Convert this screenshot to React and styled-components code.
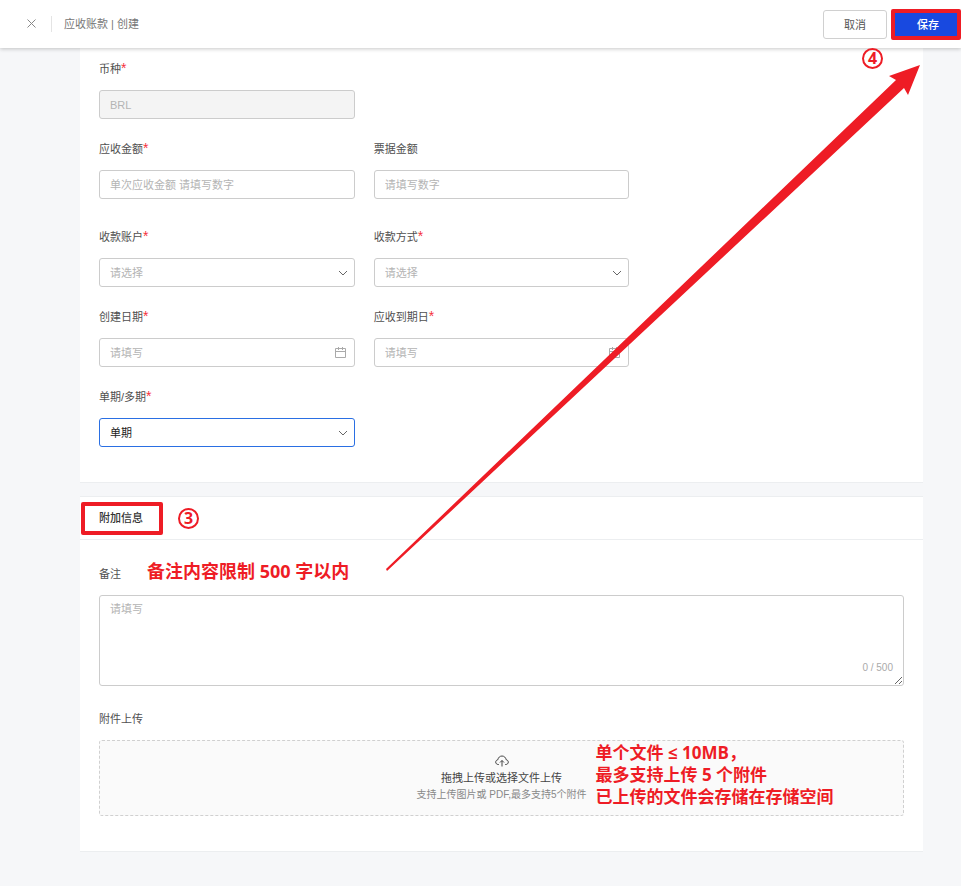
import React, { useState } from "react";
import styled, { createGlobalStyle } from "styled-components";

const GlobalStyle = createGlobalStyle`
  * {
    box-sizing: border-box;
  }
  body {
    margin: 0;
    background-color: #f6f7f9;
    color: #555;
    font-family: "Liberation Sans", "Noto Sans CJK SC", sans-serif;
    font-size: 11px;
  }
  button, input, select, textarea {
    font-family: inherit;
    font-size: 11px;
  }
`;

const Page = styled.div`
  position: relative;
`;

const Header = styled.header`
  position: sticky;
  top: 0;
  z-index: 2;
  display: flex;
  align-items: center;
  height: 48px;
  padding-left: 25px;
  background-color: #fff;
  box-shadow: 0 1px 4px rgba(0, 0, 0, 0.22);
`;

const CloseButton = styled.button`
  display: flex;
  width: 13px;
  height: 15px;
  padding: 0;
  border: none;
  background: none;
  color: #888;
  cursor: pointer;
`;

const Crumb = styled.h1`
  margin: 0 0 0 13px;
  padding-left: 12px;
  border-left: 1px solid #e4e4e4;
  color: #777;
  font-size: 11px;
  font-weight: 400;
  line-height: 16px;
`;

const Actions = styled.div`
  display: flex;
  align-items: center;
  gap: 4px;
  margin-left: auto;
`;

const Button = styled.button`
  width: ${(props) => (props.$primary ? 62 : 64)}px;
  height: ${(props) => (props.$primary ? 23 : 29)}px;
  padding: ${(props) => (props.$primary ? "0 0 0 4px" : "0")};
  border: ${(props) => (props.$primary ? "none" : "1px solid #d0d0d0")};
  border-radius: ${(props) => (props.$primary ? 0 : 3)}px;
  background-color: ${(props) => (props.$primary ? "#1849e0" : "#fff")};
  color: ${(props) => (props.$primary ? "#fff" : "#555")};
  font-weight: ${(props) => (props.$primary ? 500 : 400)};
  cursor: pointer;
`;

const Highlight = styled.div`
  display: flex;
  border: 4px solid #ee1c25;
  border-radius: 2px;
`;

const Main = styled.main`
  display: flex;
  flex-direction: column;
  gap: 13px;
  padding: 0 38px 34px 80px;
`;

const Card = styled.section`
  background-color: #fff;
  border-bottom: 1px solid #eceef0;
`;

const CardHead = styled.div`
  display: flex;
  align-items: center;
  gap: 15px;
  height: 44px;
  padding-left: 1px;
  border-top: 1px solid #eceef0;
  border-bottom: 1px solid #eceef0;
`;

const CardTitle = styled.h2`
  margin: 0;
  padding: 0 16px 0 14px;
  color: #333;
  font-size: 11px;
  font-weight: 500;
  line-height: 25px;
`;

const Form = styled.div`
  display: grid;
  grid-template-columns: repeat(3, 1fr);
  gap: 20px 19px;
  padding: 11px 19px 35px;
`;

const Field = styled.div`
  display: flex;
  flex-direction: column;
  gap: 11px;
  grid-column-start: ${(props) => (props.$newRow ? 1 : "auto")};
  padding-bottom: ${(props) => (props.$hint ? 8 : 0)}px;
`;

const Label = styled.label`
  color: #505050;
  line-height: 20px;
`;

const Required = styled.span`
  color: #f5313d;
  font-size: 14px;
  line-height: 1;
`;

const Control = styled.div`
  position: relative;
  display: flex;
`;

const Input = styled.input`
  width: 100%;
  height: 29px;
  padding: 0 10px;
  border: 1px solid #ccc;
  border-radius: 3px;
  background-color: #fff;
  color: #333;
  outline: none;

  &::placeholder {
    color: #b4b4b4;
  }
  &:disabled {
    background-color: #f4f4f4;
    color: #b4b4b4;
  }
`;

const Select = styled.select`
  width: 100%;
  height: 29px;
  padding: 0 10px;
  border: 1px solid ${(props) => (props.$active ? "#2a6fe3" : "#ccc")};
  border-radius: 3px;
  background-color: #fff;
  color: ${(props) => (props.value ? "#222" : "#b4b4b4")};
  appearance: none;
  outline: none;
`;

const ControlIcon = styled.span`
  position: absolute;
  top: 0;
  right: ${(props) => (props.$light ? 8 : 7)}px;
  display: flex;
  align-items: center;
  height: 29px;
  color: ${(props) => (props.$light ? "#aaa" : "#666")};
  pointer-events: none;
`;

const Extra = styled.div`
  display: flex;
  flex-direction: column;
  gap: 23px;
  padding: 24px 19px 35px;
`;

const LabelRow = styled.div`
  display: flex;
  align-items: flex-start;
  gap: 26px;
  height: 20px;
`;

const Textarea = styled.textarea`
  display: block;
  width: 100%;
  height: 91px;
  padding: 5px 10px;
  border: 1px solid #ccc;
  border-radius: 3px;
  line-height: 16px;
  outline: none;
  resize: vertical;

  &::placeholder {
    color: #b4b4b4;
  }
`;

const Counter = styled.span`
  position: absolute;
  right: 11px;
  bottom: 12px;
  color: #aaa;
  font-size: 10px;
  line-height: 12px;
`;

const Dropzone = styled.label`
  display: flex;
  flex-direction: column;
  align-items: center;
  width: 100%;
  height: 76px;
  padding-top: 14px;
  border: 1px dashed #d0d0d0;
  border-radius: 3px;
  background-color: #fafafa;
  color: #444;
  line-height: 17px;
  cursor: pointer;

  span {
    margin-top: 3px;
  }
  small {
    color: #888;
    font-size: 10px;
    line-height: 15px;
  }
`;

const Note = styled.strong`
  color: #ee1c25;
  font-family: "Open Sans", "Noto Sans CJK SC", sans-serif;
  font-size: 18px;
  font-weight: 700;
  line-height: 14px;
`;

const UploadNote = styled(Note)`
  position: absolute;
  top: 2px;
  left: calc(50% + 94px);
  font-size: 17px;
  line-height: 22px;
  white-space: nowrap;
  pointer-events: none;
`;

const Step = styled.span`
  display: flex;
  align-items: center;
  justify-content: center;
  width: 21px;
  height: 21px;
  border: 2px solid #ee1c25;
  border-radius: 50%;
  color: #ee1c25;
  font-family: "Open Sans", sans-serif;
  font-size: 16px;
  font-weight: 700;
  line-height: 17px;
`;

const SaveStep = styled(Step)`
  position: absolute;
  top: 48px;
  right: 78px;
  z-index: 3;
`;

const Arrow = styled.svg`
  position: absolute;
  top: 64px;
  right: 40px;
  z-index: 1;
  pointer-events: none;
`;

const Chevron = () => (
  <svg width="10" height="10" viewBox="0 0 10 10" fill="none" stroke="currentColor">
    <path d="M1 3l4 4 4-4" />
  </svg>
);

const Calendar = () => (
  <svg width="13" height="13" viewBox="0 0 13 13" fill="none" stroke="currentColor">
    <path d="M1.5 2.5h10v9h-10zM1.5 5.500h10M4.500 1v3M8.500 1v3" />
  </svg>
);

const CloudUpload = () => (
  <svg width="14" height="12" viewBox="0 0 14 12" fill="none" stroke="currentColor">
    <path d="M4 9.5H3.3C1.8 9.5.7 8.500.7 7.100c0-1.200.9-2.200 2.200-2.400C3.200 2.600 4.800 1 7 1s3.800 1.600 4.100 3.700c1.300.2 2.200 1.200 2.200 2.400 0 1.400-1.100 2.400-2.600 2.400H10" />
    <path d="M7 11.500V5.500M5 7.500l2-2 2 2" />
  </svg>
);

const FieldLabel = ({ id, text, required }) => (
  <Label htmlFor={id}>
    {text}
    {required && <Required>*</Required>}
  </Label>
);

const TextField = ({ id, label, required, date, newRow, hint, ...rest }) => (
  <Field $newRow={newRow} $hint={hint}>
    <FieldLabel id={id} text={label} required={required} />
    <Control>
      <Input id={id} {...rest} />
      {date && (
        <ControlIcon $light>
          <Calendar />
        </ControlIcon>
      )}
    </Control>
  </Field>
);

const SelectField = ({ id, label, options, initial = "", newRow }) => {
  const [value, setValue] = useState(initial);
  return (
    <Field $newRow={newRow}>
      <FieldLabel id={id} text={label} required />
      <Control>
        <Select
          id={id}
          value={value}
          $active={initial !== ""}
          onChange={(e) => setValue(e.target.value)}
        >
          <option value="">请选择</option>
          {options.map((option) => (
            <option key={option}>{option}</option>
          ))}
        </Select>
        <ControlIcon>
          <Chevron />
        </ControlIcon>
      </Control>
    </Field>
  );
};

const App = () => {
  const [remark, setRemark] = useState("");

  return (
    <Page>
      <GlobalStyle />
      <Header>
        <CloseButton aria-label="关闭">
          <svg width="13" height="13" viewBox="0 0 13 13" stroke="currentColor">
            <path d="M2.500 2.500l8 8M10.500 2.500l-8 8" />
          </svg>
        </CloseButton>
        <Crumb>应收账款 | 创建</Crumb>
        <Actions>
          <Button>取消</Button>
          <Highlight>
            <Button $primary>保存</Button>
          </Highlight>
        </Actions>
      </Header>
      <SaveStep>4</SaveStep>

      <Main>
        <Card>
          <Form>
            <TextField id="currency" label="币种" required defaultValue="BRL" disabled />
            <TextField id="amount" label="应收金额" required newRow hint placeholder="单次应收金额 请填写数字" />
            <TextField id="bill" label="票据金额" hint placeholder="请填写数字" />
            <SelectField id="account" label="收款账户" options={[]} newRow />
            <SelectField id="method" label="收款方式" options={[]} />
            <TextField id="created" label="创建日期" required date newRow placeholder="请填写" />
            <TextField id="due" label="应收到期日" required date placeholder="请填写" />
            <SelectField id="period" label="单期/多期" options={["单期", "多期"]} initial="单期" newRow />
          </Form>
        </Card>

        <Card>
          <CardHead>
            <Highlight>
              <CardTitle>附加信息</CardTitle>
            </Highlight>
            <Step>3</Step>
          </CardHead>
          <Extra>
            <Field>
              <LabelRow>
                <Label htmlFor="remark">备注</Label>
                <Note>备注内容限制 500 字以内</Note>
              </LabelRow>
              <Control>
                <Textarea
                  id="remark"
                  placeholder="请填写"
                  maxLength={500}
                  value={remark}
                  onChange={(e) => setRemark(e.target.value)}
                />
                <Counter>{remark.length} / 500</Counter>
              </Control>
            </Field>
            <Field>
              <Label htmlFor="files">附件上传</Label>
              <Control>
                <Dropzone>
                  <CloudUpload />
                  <span>拖拽上传或选择文件上传</span>
                  <small>支持上传图片或 PDF,最多支持5个附件</small>
                  <input id="files" type="file" multiple hidden />
                </Dropzone>
                <UploadNote>
                  单个文件 ≤ 10MB，
                  <br />
                  最多支持上传 5 个附件
                  <br />
                  已上传的文件会存储在存储空间
                </UploadNote>
              </Control>
            </Field>
          </Extra>
        </Card>
      </Main>

      <Arrow width="536" height="508" viewBox="0 0 536 508" fill="#ee1c25">
        <path d="M1 505L511 16 504 12 535 1 523 31 519 24 2 507Z" />
      </Arrow>
    </Page>
  );
};

export default App;
